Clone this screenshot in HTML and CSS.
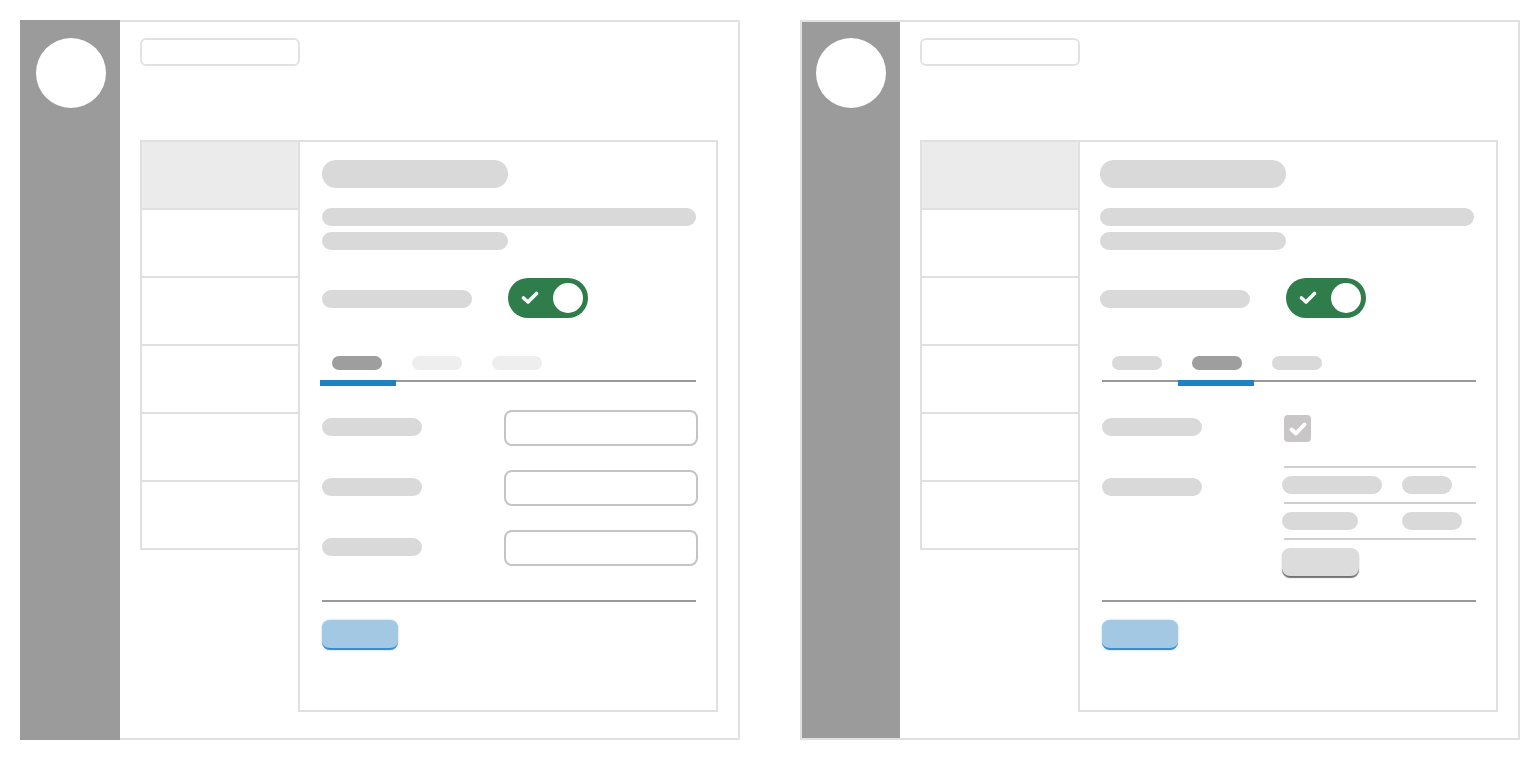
FILE: index.html
```html
<!DOCTYPE html>
<html lang="en">
<head>
    <meta charset="UTF-8">
    <meta name="viewport" content="width=device-width, initial-scale=1.0">
    <title>Settings wireframe</title>
    <link rel="stylesheet" href="styles.css">
</head>
<body>
    <!-- Frame 1: general tab -->
    <div class="frame frame-flush">
        <div class="sidebar"><div class="avatar"></div></div>
        <div class="main">
            <div class="search"></div>
            <div class="panel">
                <div class="nav">
                    <div class="nav-item active"></div>
                    <div class="nav-item"></div>
                    <div class="nav-item"></div>
                    <div class="nav-item"></div>
                    <div class="nav-item"></div>
                    <div class="nav-item"></div>
                </div>
                <div class="content">
                    <div class="pill title"></div>
                    <div class="pill desc-long"></div>
                    <div class="pill desc-short"></div>
                    <div class="toggle-row">
                        <div class="pill toggle-label"></div>
                        <div class="toggle">
                            <svg class="toggle-check" width="18" height="14" viewBox="0 0 18 14"><path d="M2.5 7 L7 11 L15.5 2.5" fill="none" stroke="#fff" stroke-width="3.6" stroke-linecap="round" stroke-linejoin="round"/></svg>
                            <div class="knob"></div>
                        </div>
                    </div>
                    <div class="tabs tabs-light">
                        <div class="tab active"><div class="tab-pill"></div></div>
                        <div class="tab"><div class="tab-pill"></div></div>
                        <div class="tab"><div class="tab-pill"></div></div>
                    </div>
                    <div class="form">
                        <div class="form-row">
                            <div class="pill field-label"></div>
                            <div class="input"></div>
                        </div>
                        <div class="form-row">
                            <div class="pill field-label"></div>
                            <div class="input"></div>
                        </div>
                        <div class="form-row">
                            <div class="pill field-label"></div>
                            <div class="input"></div>
                        </div>
                    </div>
                    <div class="footer">
                        <button class="btn-primary"></button>
                    </div>
                </div>
            </div>
        </div>
    </div>

    <!-- Frame 2: second tab with checkbox and list -->
    <div class="frame">
        <div class="sidebar"><div class="avatar"></div></div>
        <div class="main">
            <div class="search"></div>
            <div class="panel">
                <div class="nav">
                    <div class="nav-item active"></div>
                    <div class="nav-item"></div>
                    <div class="nav-item"></div>
                    <div class="nav-item"></div>
                    <div class="nav-item"></div>
                    <div class="nav-item"></div>
                </div>
                <div class="content content-tight">
                    <div class="pill title"></div>
                    <div class="pill desc-long"></div>
                    <div class="pill desc-short"></div>
                    <div class="toggle-row">
                        <div class="pill toggle-label"></div>
                        <div class="toggle">
                            <svg class="toggle-check" width="18" height="14" viewBox="0 0 18 14"><path d="M2.5 7 L7 11 L15.5 2.5" fill="none" stroke="#fff" stroke-width="3.6" stroke-linecap="round" stroke-linejoin="round"/></svg>
                            <div class="knob"></div>
                        </div>
                    </div>
                    <div class="tabs tabs-second">
                        <div class="tab"><div class="tab-pill"></div></div>
                        <div class="tab active"><div class="tab-pill"></div></div>
                        <div class="tab"><div class="tab-pill"></div></div>
                    </div>
                    <div class="form">
                        <div class="form-row">
                            <div class="pill field-label"></div>
                            <div class="checkbox">
                                <svg width="20" height="16" viewBox="0 0 20 16"><path d="M3.5 8.5 L8 12.5 L16.5 3.5" fill="none" stroke="#fff" stroke-width="4" stroke-linecap="round" stroke-linejoin="round"/></svg>
                            </div>
                        </div>
                        <div class="form-row">
                            <div class="pill field-label"></div>
                            <div class="list">
                                <div class="list-row">
                                    <div class="pill cell-a"></div>
                                    <div class="pill cell-b"></div>
                                </div>
                                <div class="list-row">
                                    <div class="pill cell-c"></div>
                                    <div class="pill cell-d"></div>
                                </div>
                                <div class="list-end">
                                    <button class="btn-secondary"></button>
                                </div>
                            </div>
                        </div>
                    </div>
                    <div class="footer">
                        <button class="btn-primary"></button>
                    </div>
                </div>
            </div>
        </div>
    </div>
</body>
</html>
```

FILE: styles.css
```css
* {
    margin: 0;
    padding: 0;
    box-sizing: border-box;
}

body {
    font-family: "Liberation Sans", Arial, sans-serif;
    background: #fff;
    display: flex;
    gap: 60px;
    padding: 20px;
}

.frame {
    width: 720px;
    height: 720px;
    border: 2px solid #e0e0e0;
    display: flex;
    background: #fff;
}

.sidebar {
    width: 98px;
    background: #9b9b9b;
    display: flex;
    justify-content: center;
    align-items: flex-start;
    padding-top: 16px;
}

.frame-flush .sidebar {
    width: 100px;
    margin: -2px 0 -2px -2px;
    padding: 18px 0 0 2px;
}

.avatar {
    width: 70px;
    height: 70px;
    border-radius: 50%;
    background: #fff;
}

.main {
    flex: 1;
    padding: 16px 20px 0 20px;
}

.search {
    width: 160px;
    height: 28px;
    border: 2px solid #e2e2e2;
    border-radius: 6px;
}

.panel {
    margin-top: 74px;
    display: flex;
    height: 572px;
}

.nav {
    width: 158px;
    align-self: flex-start;
    border-left: 2px solid #e0e0e0;
    border-top: 2px solid #e0e0e0;
}

.nav-item {
    height: 68px;
    border-bottom: 2px solid #e0e0e0;
}

.nav-item.active {
    background: #ebebeb;
}

.content {
    width: 420px;
    border: 2px solid #e0e0e0;
    padding: 18px 20px 0 22px;
}

.content-tight .title,
.content-tight .desc-long,
.content-tight .desc-short,
.content-tight .toggle-row {
    margin-left: -2px;
}

.pill {
    background: #d9d9d9;
    border-radius: 9px;
    height: 18px;
}

.title {
    width: 186px;
    height: 28px;
    border-radius: 14px;
}

.desc-long {
    width: 374px;
    margin-top: 20px;
}

.desc-short {
    width: 186px;
    margin-top: 6px;
}

.toggle-row {
    display: flex;
    align-items: flex-start;
    margin-top: 28px;
}

.toggle-label {
    width: 150px;
    margin-top: 12px;
}

.toggle {
    margin-left: 36px;
    width: 80px;
    height: 40px;
    border-radius: 20px;
    background: #2e7d4a;
    display: flex;
    align-items: center;
    justify-content: space-between;
    padding: 0 5px 0 13px;
}

.toggle-check {
    display: block;
}

.knob {
    width: 30px;
    height: 30px;
    border-radius: 50%;
    background: #fff;
}

.tabs {
    display: flex;
    margin-top: 38px;
    border-bottom: 2px solid #999;
}

.tab {
    width: 80px;
    position: relative;
    padding: 0 0 10px 10px;
}

.tab-pill {
    width: 50px;
    height: 14px;
    border-radius: 7px;
    background: #d9d9d9;
}

.tabs-light .tab-pill {
    background: #eeeeee;
}

.tab.active .tab-pill {
    background: #9e9e9e;
}

.tab.active::after {
    content: "";
    position: absolute;
    left: -2px;
    top: 100%;
    width: 76px;
    height: 6px;
    background: #2080c4;
}

.tabs-second .tab.active::after {
    left: -4px;
}

.form {
    height: 218px;
    padding-top: 28px;
    display: flex;
    flex-direction: column;
    gap: 24px;
}

.form-row {
    display: grid;
    grid-template-columns: 182px 1fr;
    align-items: start;
    min-height: 36px;
}

.field-label {
    width: 100px;
    margin-top: 8px;
}

.input {
    width: 194px;
    height: 36px;
    border: 2px solid #c4c4c4;
    border-radius: 8px;
}

.checkbox {
    width: 27px;
    height: 27px;
    margin-top: 5px;
    border-radius: 4px;
    background: #c8c6c6;
    display: flex;
    align-items: center;
    justify-content: center;
}

.checkbox svg {
    display: block;
}

.list {
    margin-top: -4px;
    width: 192px;
}

.list-row {
    display: grid;
    grid-template-columns: 120px 1fr;
    border-top: 2px solid #cfcfcf;
    padding: 8px 0;
}

.list-row .pill {
    margin-left: -2px;
}

.cell-a { width: 100px; }
.cell-b { width: 50px; }
.cell-c { width: 76px; }
.cell-d { width: 60px; }

.list-end {
    border-top: 2px solid #cfcfcf;
    padding-top: 8px;
}

.btn-secondary {
    display: block;
    margin-left: -2px;
    width: 77px;
    height: 28px;
    border: none;
    border-radius: 8px;
    background: #dcdcdc;
    box-shadow: 0 2px 1px rgba(0, 0, 0, 0.55);
}

.footer {
    border-top: 2px solid #999;
    padding-top: 18px;
}

.btn-primary {
    display: block;
    width: 76px;
    height: 30px;
    border: none;
    border-bottom: 2px solid #3a8ed0;
    border-radius: 8px;
    background: #a3c8e3;
    box-shadow: 0 0 2px rgba(58, 142, 208, 0.5);
}
```
